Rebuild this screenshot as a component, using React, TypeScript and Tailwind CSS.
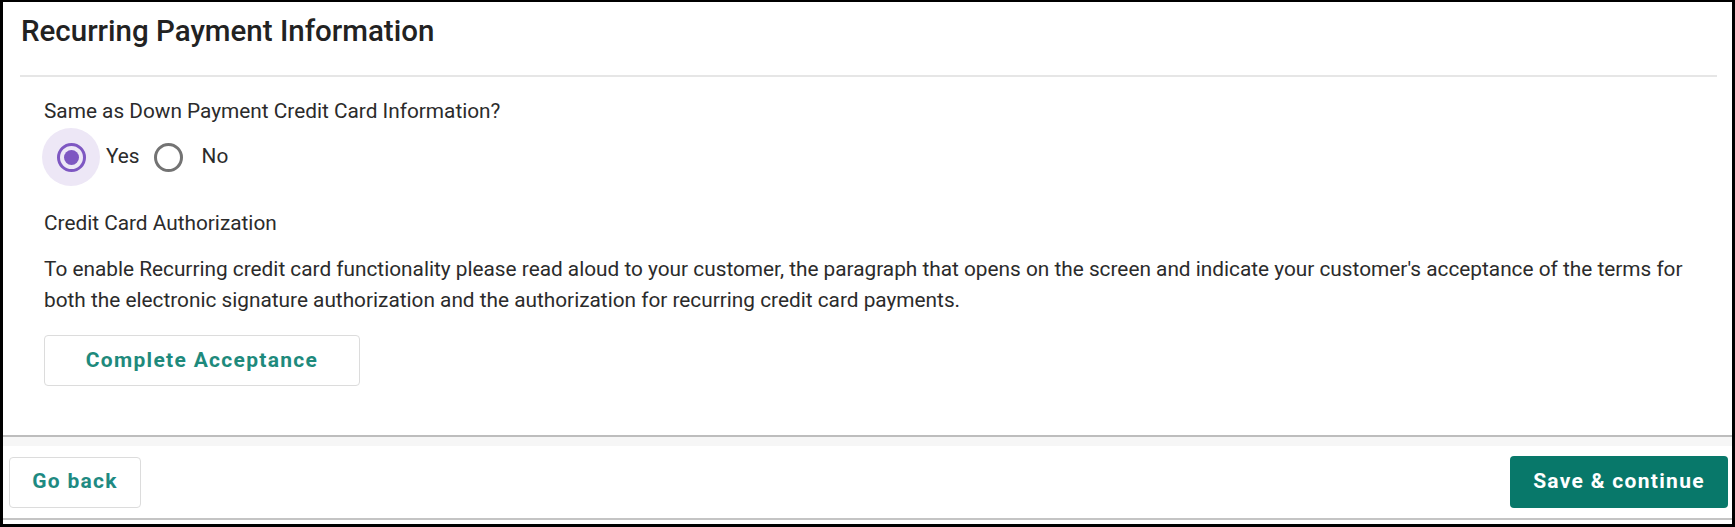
export default function App() {
  const font = { fontFamily: "Roboto, 'Noto Sans', sans-serif" };
  return (
    <div
      style={font}
      className="w-[1735px] h-[527px] bg-white border-black border-x-[3px] border-t-[2px] border-b-[3px] flex flex-col text-[#2b2b2b]"
    >
      {/* header */}
      <div className="pl-[18px] pr-[15px] pt-[11px]">
        <h1 className="text-[29.5px] leading-[36px] font-medium text-[#222222]">Recurring Payment Information</h1>
        <div className="mt-[26px] ml-[-1px] h-[2px] bg-[#e6e6e6]" />
      </div>

      {/* body */}
      <div className="flex-1 pl-[41px] pt-[21px]">
        <p className="text-[20.8px] leading-[26px]">Same as Down Payment Credit Card Information?</p>

        <div className="flex items-center h-[58px] mt-[4px] ml-[-2px]">
          <label className="flex items-center">
            <span className="w-[58px] h-[58px] rounded-full bg-[#ede7f6] flex items-center justify-center">
              <span className="w-[29px] h-[29px] rounded-full border-[3px] border-[#7e57c2] flex items-center justify-center">
                <span className="w-[15px] h-[15px] rounded-full bg-[#7e57c2]" />
              </span>
            </span>
            <span className="ml-[6px] text-[20.8px]">Yes</span>
          </label>
          <label className="flex items-center ml-[14px]">
            <span className="w-[29px] h-[29px] rounded-full border-[3px] border-[#737373]" />
            <span className="ml-[19px] text-[20.8px]">No</span>
          </label>
        </div>

        <p className="mt-[24px] text-[20.8px] leading-[26px]">Credit Card Authorization</p>
        <p className="mt-[18px] text-[20.8px] leading-[31px] pr-[20px]">
          To enable Recurring credit card functionality please read aloud to your customer, the paragraph that opens on
          the screen and indicate your customer's acceptance of the terms for both the electronic signature authorization
          and the authorization for recurring credit card payments.
        </p>

        <button className="mt-[19px] w-[316px] h-[51px] rounded-[4px] border border-[#dcdcdc] bg-white text-[#1e8a7c] text-[21px] font-bold tracking-[1.3px]">
          Complete Acceptance
        </button>
      </div>

      {/* footer */}
      <div className="border-t-[2px] border-[#bdbdbd]">
        <div className="h-[9px] bg-[#f6f6f6]" />
        <div className="flex items-center justify-between pl-[6px] pr-[4px] h-[74px] border-b-[2px] border-[#c4c4c4]">
          <button className="w-[132px] h-[51px] rounded-[4px] border border-[#dcdcdc] bg-white text-[#1e8a82] text-[21px] font-bold tracking-[1.3px]">
            Go back
          </button>
          <button className="w-[218px] h-[52px] rounded-[4px] bg-[#08786a] text-white text-[21px] font-bold tracking-[1.3px]">
            Save &amp; continue
          </button>
        </div>
        <div className="h-[4px]" />
      </div>
    </div>
  );
}
